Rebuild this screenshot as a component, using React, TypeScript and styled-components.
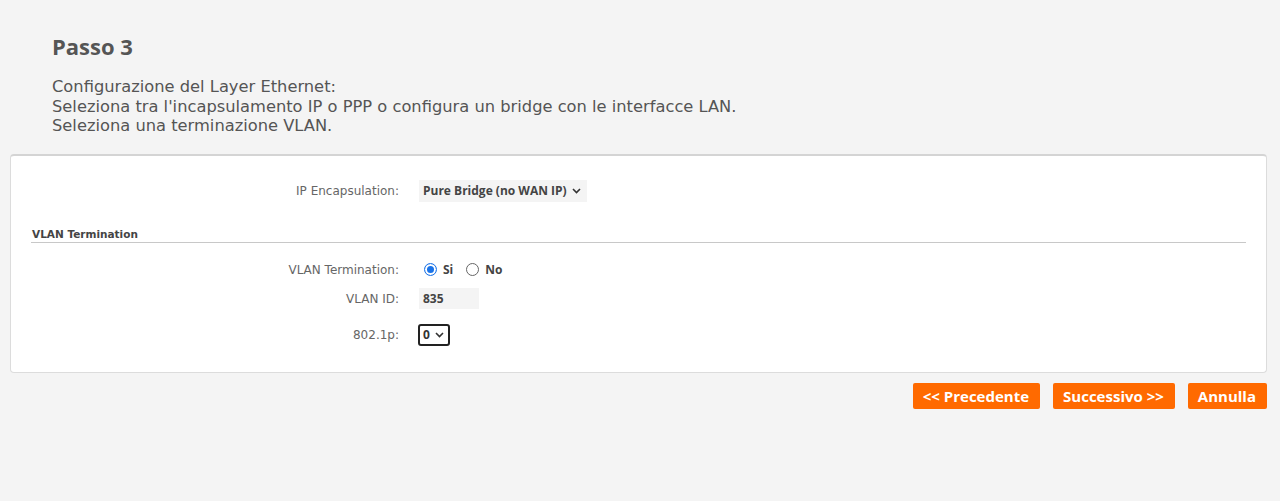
import React from "react";
import styled, { createGlobalStyle } from "styled-components";

const GlobalStyle = createGlobalStyle`
  html, body {
    margin: 0;
    padding: 0;
    background: #f4f4f4;
  }
  body {
    font-family: "DejaVu Sans", "Liberation Sans", sans-serif;
    color: #555;
  }
`;

export default function App() {
  return (
    <>
      <GlobalStyle />
      <Page>
        <Header>
          <Title>Passo 3</Title>
          <Description>
            Configurazione del Layer Ethernet:
            <br />
            Seleziona tra l'incapsulamento IP o PPP o configura un bridge con le interfacce LAN.
            <br />
            Seleziona una terminazione VLAN.
          </Description>
        </Header>

        <Panel>
          <FormRow>
            <Label>IP Encapsulation:</Label>
            <SelectBox>
              Pure Bridge (no WAN IP)
              <Chevron />
            </SelectBox>
          </FormRow>

          <SectionTitle>VLAN Termination</SectionTitle>

          <FormRow>
            <Label>VLAN Termination:</Label>
            <RadioGroup>
              <RadioOption>
                <Radio $checked />
                Si
              </RadioOption>
              <RadioOption>
                <Radio />
                No
              </RadioOption>
            </RadioGroup>
          </FormRow>
          <FormRow $tight>
            <Label>VLAN ID:</Label>
            <TextInput>835</TextInput>
          </FormRow>
          <FormRow>
            <Label>802.1p:</Label>
            <SmallSelect>
              0
              <Chevron />
            </SmallSelect>
          </FormRow>
        </Panel>

        <Actions>
          <Button>&lt;&lt; Precedente</Button>
          <Button>Successivo &gt;&gt;</Button>
          <Button>Annulla</Button>
        </Actions>
      </Page>
    </>
  );
}

const Chevron = () => (
  <svg width="9" height="6" viewBox="0 0 9 6" style={{ marginLeft: 5 }}>
    <path d="M1 1l3.5 3.5L8 1" fill="none" stroke="#333" strokeWidth="1.6" />
  </svg>
);

//******** Styles ********//

const Page = styled.div`
  padding: 0 13px 0 10px;
`;

const Header = styled.div`
  padding: 31px 0 18px 42px;
`;

const Title = styled.h1`
  margin: 0 0 16px;
  font-family: "Open Sans", "Liberation Sans", sans-serif;
  font-size: 22px;
  font-weight: 700;
  line-height: 30px;
  color: #555;
`;

const Description = styled.p`
  margin: 0;
  font-size: 16.3px;
  line-height: 19.5px;
  color: #555;
`;

const Panel = styled.div`
  background: #fff;
  border: 1px solid #dcdcdc;
  border-top: 2px solid #d4d4d4;
  border-radius: 4px;
  padding: 24px 20px 19px 20px;
`;

const FormRow = styled.div<{ $tight?: boolean }>`
  display: grid;
  grid-template-columns: 368px auto;
  column-gap: 20px;
  align-items: center;
  min-height: 22px;
  margin-bottom: ${(p) => (p.$tight ? "14px" : "7px")};
`;

const Label = styled.div`
  text-align: right;
  font-size: 12px;
  color: #666;
`;

const SelectBox = styled.div`
  display: inline-flex;
  align-items: center;
  justify-self: start;
  height: 22px;
  padding: 0 6px 0 4px;
  background: #f4f4f4;
  font-family: "Open Sans", "Liberation Sans", sans-serif;
  font-size: 12px;
  font-weight: 700;
  color: #444;
`;

const SectionTitle = styled.div`
  margin: 26px 0 16px;
  padding: 0 0 2px 1px;
  border-bottom: 1px solid #c8c8c8;
  font-size: 10.5px;
  font-weight: 700;
  color: #444;
`;

const RadioGroup = styled.div`
  display: flex;
  align-items: center;
  gap: 13px;
  padding-left: 5px;
`;

const RadioOption = styled.label`
  display: inline-flex;
  align-items: center;
  gap: 6px;
  font-family: "Open Sans", "Liberation Sans", sans-serif;
  font-size: 12px;
  font-weight: 700;
  color: #444;
`;

const Radio = styled.span<{ $checked?: boolean }>`
  box-sizing: border-box;
  width: 13px;
  height: 13px;
  border-radius: 50%;
  border: 1px solid ${(p) => (p.$checked ? "#1a73e8" : "#666")};
  background: #fff;
  box-shadow: ${(p) => (p.$checked ? "inset 0 0 0 2px #fff, inset 0 0 0 6px #1a73e8" : "none")};
`;

const TextInput = styled.div`
  justify-self: start;
  box-sizing: border-box;
  width: 60px;
  height: 21px;
  line-height: 21px;
  padding-left: 4px;
  background: #f4f4f4;
  font-family: "Open Sans", "Liberation Sans", sans-serif;
  font-size: 12px;
  font-weight: 700;
  color: #444;
`;

const SmallSelect = styled.div`
  display: inline-flex;
  align-items: center;
  justify-self: start;
  box-sizing: border-box;
  height: 22px;
  margin-left: -1px;
  padding: 0 4px 0 3px;
  border: 2px solid #222;
  border-radius: 3px;
  font-family: "Open Sans", "Liberation Sans", sans-serif;
  font-size: 12px;
  font-weight: 700;
  color: #333;
`;

const Actions = styled.div`
  display: flex;
  justify-content: flex-end;
  gap: 13px;
  margin-top: 10px;
`;

const Button = styled.button`
  height: 26px;
  padding: 0 11px 0 10px;
  border: none;
  border-radius: 2px;
  background: #ff6a00;
  color: #fff;
  font-family: "Open Sans", "Liberation Sans", sans-serif;
  font-size: 15px;
  font-weight: 700;
  cursor: pointer;
`;
